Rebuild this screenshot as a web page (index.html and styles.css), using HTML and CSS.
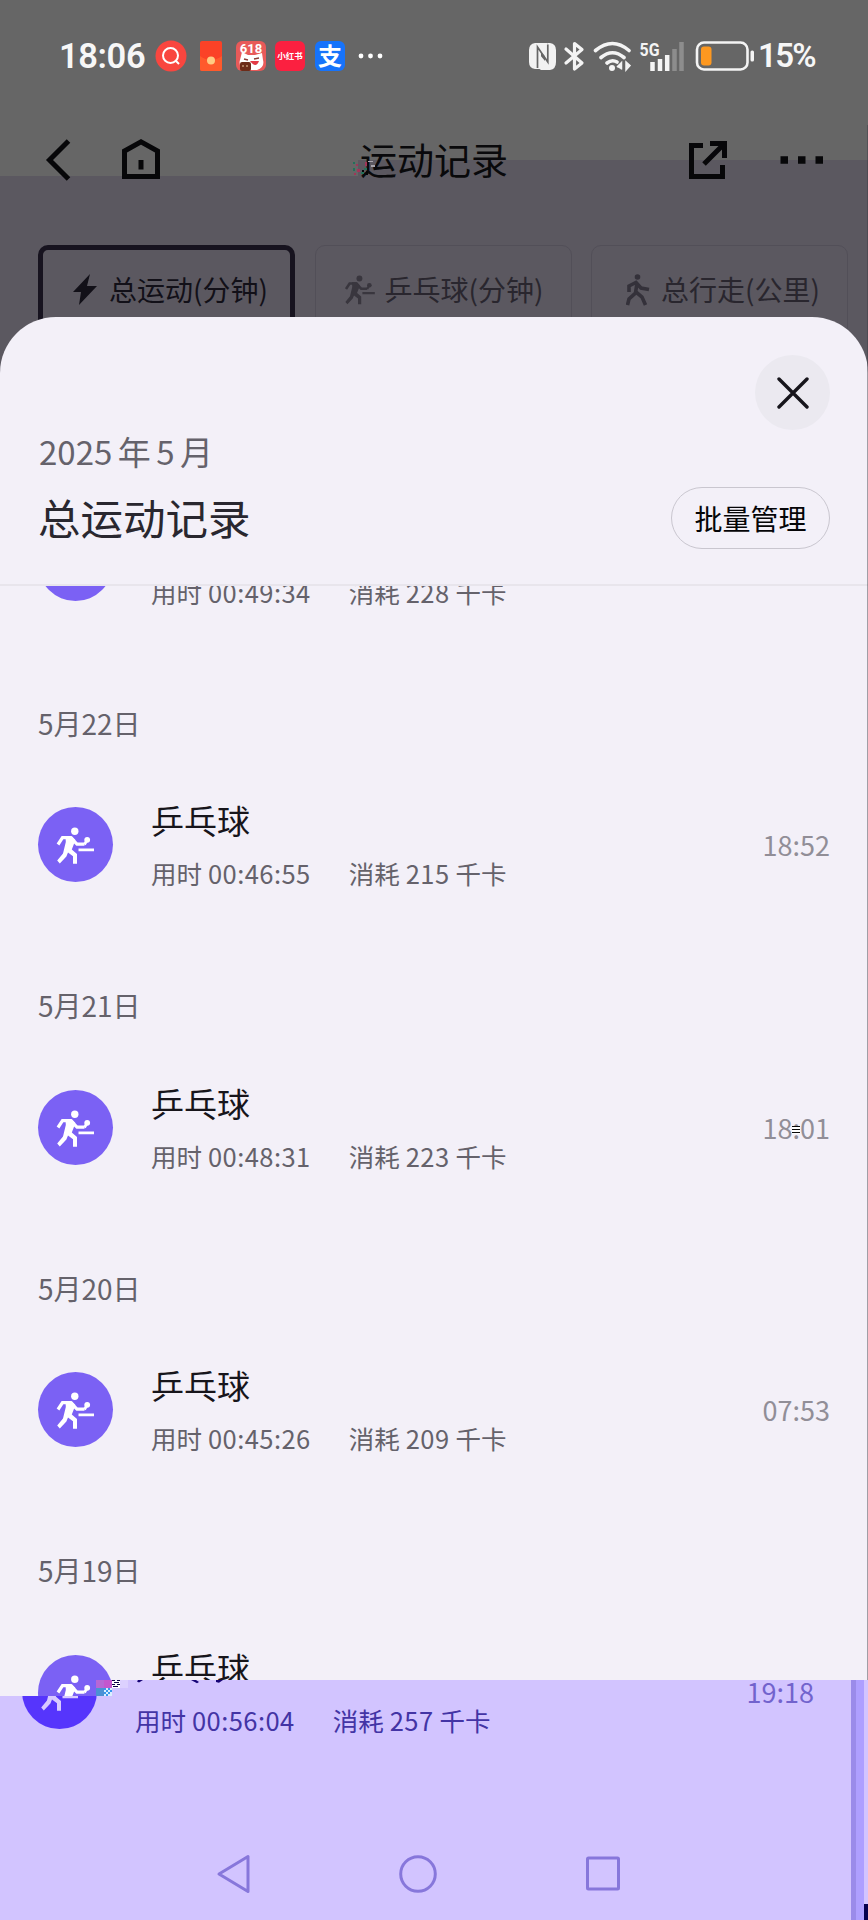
FILE: index.html
```html
<!DOCTYPE html>
<html lang="zh-CN">
<head>
<meta charset="utf-8">
<title>运动记录</title>
<link rel="stylesheet" href="styles.css">
</head>
<body>
<svg width="0" height="0" class="defs">
  <symbol id="player" viewBox="0 0 75 75">
    <circle cx="36.8" cy="24.3" r="3.7" fill="currentColor"/>
    <path d="M20 37.5L24.500 30.700H32.500L39 37.200H46.500" fill="none" stroke="currentColor" stroke-width="3.200"/>
    <path d="M27.500 29.200H34L37.500 33L33.800 42.500L39 47V56.700H35V49.300L30 45.500L28.400 49.500L21.800 56.500L19.200 53.600L25 46.500L27.800 35Z" fill="currentColor"/>
    <circle cx="49.200" cy="32.800" r="2.900" fill="currentColor"/>
    <path d="M46.500 37.500L48.500 34M40.500 42.800H56" stroke="currentColor" stroke-width="2.800"/>
  </symbol>
</svg>
<div class="screen">
  <header class="status">
    <span class="clock">18:06</span>
    <div class="apps">
      <svg width="32" height="32" viewBox="0 0 32 32"><circle cx="16" cy="16" r="15.500" fill="#f9463f"/><circle cx="15.500" cy="15.500" r="7.500" fill="none" stroke="#fff" stroke-width="2"/><path d="M21 21L24 24" stroke="#fff" stroke-width="2"/></svg>
      <svg class="envelope" width="22" height="30" viewBox="0 0 22 30"><rect width="22" height="30" rx="2" fill="#fb4227"/><path d="M0 15Q11 23 22 15V28Q22 30 20 30H2Q0 30 0 28Z" fill="#ff5a2c"/><circle cx="11" cy="19.500" r="4" fill="#ffcb83"/></svg>
      <svg class="sale" width="30" height="30" viewBox="0 0 30 30"><rect width="30" height="30" rx="6" fill="#e85a59"/><text x="15" y="12" text-anchor="middle" font-size="13" font-weight="700" fill="#fff">618</text><path d="M4 19L6 11L12 14H19L26 12L27 19Q29 26 21 29H9Q2 25 4 19Z" fill="#fff"/><path d="M8 18L12 19M18 18L23 17" stroke="#8e3d36" stroke-width="1.500"/><path d="M14 20H23Q20 28 14 20Z" fill="#e33945"/><rect x="4" y="21" width="11" height="9" rx="2" fill="#6b2c19"/><path d="M7 24v2M11 24v2" stroke="#eac9a0"/></svg>
      <span class="app red">小红书</span>
      <span class="app blue">支</span>
      <svg width="25" height="6" viewBox="0 0 25 6" fill="#fff"><circle cx="3" cy="3" r="2.400"/><circle cx="12.500" cy="3" r="2.400"/><circle cx="22" cy="3" r="2.400"/></svg>
    </div>
    <div class="signals">
      <svg width="226" height="34" viewBox="528 38 226 34">
        <path d="M535 42H547L551 45V62L541 51V68H535Q529 67 529 61V49Q529 43 535 42Z" fill="#f2f2f2"/>
        <path d="M548 42H550Q556 43 556 49V61Q556 68 550 69H541L535 65V48L545 60V45Z" fill="#f2f2f2"/>
        <path d="M537.500 67V46L547.800 61V43.500" fill="none" stroke="#666" stroke-width="1.700"/>
        <path d="M566 48L582 62L574.500 68V42.500L582 48.500L566 62" fill="none" stroke="#f4f4f4" stroke-width="3.200" stroke-linejoin="round" stroke-linecap="round"/>
        <path d="M595.500 49.500Q612.500 35.500 629 49.500M601 56.500Q612.500 47 624 56.500M607 62Q612 58 617 61" fill="none" stroke="#f4f4f4" stroke-width="3.600" stroke-linecap="round"/>
        <circle cx="612" cy="67" r="3" fill="#f4f4f4"/>
        <path d="M617 66L621.500 61.500V68.500M626 61V69L630 64.500Z" fill="#f4f4f4" stroke="#f4f4f4" stroke-width="1.500"/>
        <text x="639.500" y="55" font-size="19" font-weight="700" textLength="20" lengthAdjust="spacingAndGlyphs" fill="#f4f4f4">5G</text>
        <path d="M652.500 61V70M660 58V70M667.200 54V70" stroke="#f4f4f4" stroke-width="4.500"/>
        <path d="M674.500 48V70M681.500 41V70" stroke="#8d8d8d" stroke-width="4.500"/>
        <rect x="697" y="41.500" width="50.500" height="27" rx="7" fill="none" stroke="#f4f4f4" stroke-width="2.600"/>
        <rect x="701" y="45.500" width="10.500" height="19" rx="3" fill="#fd9820"/>
        <rect x="750.500" y="49.500" width="3.500" height="11" rx="1.500" fill="#f4f4f4"/>
      </svg>
      <span class="percent">15%</span>
    </div>
  </header>
  <nav class="titlebar">
    <svg width="120" height="50" viewBox="44 135 120 50" fill="none" stroke="#070709" stroke-width="5">
      <path d="M68.500 141L49.500 160L68.500 179"/>
      <path d="M124.500 176.500V151L141 141.800L157.500 151V176.500Z"/><path d="M141 160V169.500"/>
    </svg>
    <h1>运动记录</h1>
    <svg width="140" height="50" viewBox="686 135 140 50" fill="none" stroke="#070709" stroke-width="5">
      <path d="M703 145.500H691.500V176.500H722.500V165M704 164L723.500 144.500M710 143.500H724.500V158"/>
      <path d="M780.500 160H788M798 160H805.500M815.500 160H823" stroke-width="7.500"/>
    </svg>
    <svg class="specks" width="24" height="16" viewBox="0 0 24 16" shape-rendering="crispEdges"><path d="M1 2h2v2H1zM1 8h2v3H1zM9 12h3v2H9zM12 8h3v2h-3z" fill="#23705a"/><path d="M4 4h2v2H4zM5 9h3v3H5zM13 2h2v4h-2zM2 13h2v2H2z" fill="#a13459"/><path d="M16 1h5v1h-5zM19 5h4v2h-4z" fill="#a9a6ad"/><path d="M10 10h2v2h-2zM14 11h2v4h-2z" fill="#050507"/></svg>
  </nav>
  <div class="tabs">
    <div class="tab active"><svg width="24" height="31" viewBox="0 0 24 31"><path d="M17 0L0 18H8L6 31L24 12H14Z" fill="#121018"/></svg><span>总运动(分钟)</span></div>
    <div class="tab"><svg class="mini" width="60" height="60"><use href="#player"/></svg><span>乒乓球(分钟)</span></div>
    <div class="tab walk"><svg width="24" height="32" viewBox="0 0 24 32"><circle cx="11.500" cy="3" r="2.800" fill="#34313a"/><path d="M3 18V12L10 8.500L15 14L23 15.500M11 9L9.500 19L3 25L1.500 31M10 18L16 23L19.500 31" fill="none" stroke="#34313a" stroke-width="3.600"/></svg><span>总行走(公里)</span></div>
  </div>
  <main class="sheet">
    <div class="sheet-head">
      <button class="close" aria-label="关闭"><svg width="32" height="32" viewBox="0 0 32 32"><path d="M2 2L30 30M30 2L2 30" stroke="#17151c" stroke-width="3.400" stroke-linecap="round"/></svg></button>
      <div class="month"><span>2025</span><span>年</span><span>5</span><span>月</span></div>
      <div class="heading"><h2>总运动记录</h2><button class="manage">批量管理</button></div>
    </div>
    <div class="list">
      <section class="day first">
        <div class="record"><svg class="icon"></svg><div class="info"><b></b><p><span>用时</span><span class="num">00:49:34</span><span class="burn">消耗</span><span class="num">228</span><span>千卡</span></p></div></div>
      </section>
      <section class="day">
        <div class="date">5月22日</div>
        <div class="record"><svg class="icon"><use href="#player"/></svg><div class="info"><b>乒乓球</b><p><span>用时</span><span class="num">00:46:55</span><span class="burn">消耗</span><span class="num">215</span><span>千卡</span></p></div><time>18:52</time></div>
      </section>
      <section class="day">
        <div class="date">5月21日</div>
        <div class="record"><svg class="icon"><use href="#player"/></svg><div class="info"><b>乒乓球</b><p><span>用时</span><span class="num">00:48:31</span><span class="burn">消耗</span><span class="num">223</span><span>千卡</span></p></div><time class="striped">18:01</time></div>
      </section>
      <section class="day">
        <div class="date">5月20日</div>
        <div class="record"><svg class="icon"><use href="#player"/></svg><div class="info"><b>乒乓球</b><p><span>用时</span><span class="num">00:45:26</span><span class="burn">消耗</span><span class="num">209</span><span>千卡</span></p></div><time>07:53</time></div>
      </section>
      <section class="day">
        <div class="date">5月19日</div>
        <div class="record"><svg class="icon"><use href="#player"/></svg><div class="info"><b>乒乓球</b></div></div>
      </section>
    </div>
  </main>
  <footer class="tinted">
    <div class="record"><svg class="icon"><use href="#player"/></svg><div class="info"><b></b><p><span>用时</span><span class="num">00:56:04</span><span class="burn">消耗</span><span class="num">257</span><span>千卡</span></p></div><time>19:18</time></div>
    <div class="keys">
      <svg width="36" height="42" viewBox="0 0 36 42"><path d="M32 3.500V38.500L3 21Z"/></svg>
      <svg width="42" height="42" viewBox="0 0 42 42"><circle cx="21" cy="21" r="17.300"/></svg>
      <svg width="38" height="42" viewBox="0 0 38 42"><rect x="3.500" y="5" width="31" height="31" rx="1"/></svg>
    </div>
    <div class="slice"><div class="record"><svg class="icon"><use href="#player"/></svg></div></div>
    <svg class="blocks" width="32" height="16" viewBox="0 0 32 16" shape-rendering="crispEdges"><path d="M0 0H8V8H0z" fill="#b767d5"/><path d="M8 0H16V8H8z" fill="#c357ce"/><path d="M0 8H8V16H0z" fill="#4b91d4"/><path d="M8 8H16V16H8z" fill="#d9f0ff"/><path d="M8 8h2v2H8zM12 8h2v2h-2zM10 10h2v2h-2zM14 10h2v2h-2zM8 12h2v2H8zM12 12h2v2h-2zM10 14h2v2h-2z" fill="#3797ec"/><path d="M16 0H24V8H16z" fill="#fff"/><path d="M16 0h3v1h-3zM21 0h3v1h-3zM18 2h5v1h-5zM16 4h3v1h-3zM21 4h3v1h-3zM17 6h5v1h-5z" fill="#080047"/><path d="M24 0h8v8h-8z" fill="#dcd1ff"/></svg>
    <svg class="strokes" width="90" height="4" viewBox="0 0 90 4" fill="#160477"><path d="M1 0H6L2 2.500L0 1.500ZM54 0H59L62 2L60 3.200ZM79 0H86L82 2.800L79 2Z"/></svg>
    <i class="corner"></i>
  </footer>
  <i class="edge"></i>
</div>
</body>
</html>
```
FILE: styles.css
```css
* { box-sizing: border-box; margin: 0; padding: 0; }
body { width: 868px; height: 1920px; overflow: hidden; font-family: "Noto Sans CJK SC", sans-serif; background: #5b5860; }
svg { display: block; flex: none; }
.defs { position: absolute; }
button { font: inherit; border: 0; }
.screen { position: relative; display: flex; flex-direction: column; width: 868px; height: 1920px; overflow: hidden;
  background: linear-gradient(#666, #666) 0 0 / 100% 160px no-repeat, linear-gradient(#666, #666) 0 0 / 358px 176px no-repeat, #5b5860; }

.status { height: 110px; padding: 1px 54px 0 59px; display: flex; align-items: center; color: #f7f7f7; }
.clock { font: 600 34.500px/40px Roboto, sans-serif; width: 96px; letter-spacing: -0.400px; }
.apps { display: flex; align-items: center; }
.envelope { margin-left: 13px; }
.sale { margin-left: 14px; font-family: Roboto, sans-serif; }
.app { width: 30px; height: 30px; border-radius: 6px; color: #fff; text-align: center; }
.red { margin-left: 9px; background: #fb2040; font-size: 8.500px; line-height: 29px; font-weight: 700; }
.blue { margin: 0 13px 0 10px; background: #1673fb; font-size: 24px; line-height: 28px; font-weight: 700; }
.signals { margin-left: auto; display: flex; align-items: center; gap: 4px; font-family: Roboto, sans-serif; margin-right: -1px; }
.percent { font: 600 33px/40px Roboto, sans-serif; width: 57px; letter-spacing: -1.700px; }

.titlebar { position: relative; height: 100px; padding: 0 42px 0 44px; display: flex; align-items: center; justify-content: space-between; }
.titlebar h1 { font-size: 37px; line-height: 50px; font-weight: 400; color: #09090b; margin: -3px 0 0 18px; }
.specks { position: absolute; left: 352px; top: 50px; }

.tabs { height: 107px; padding: 35px 0 0 38px; display: flex; gap: 19.500px; width: 900px; }
.tab { width: 257px; height: 92px; flex: none; padding: 13px 0 0 28px; border: 1px solid #524f58; border-radius: 10px; display: flex; gap: 12px; color: #29262e; font-size: 28px; line-height: 60px; }
.tab svg { margin-top: 15px; }
.tab.active { border: 5px solid #17131f; padding: 9px 0 0 30px; color: #121018; }
.tab .mini { margin: 0 -17px 0 -14px; color: #39363e; }
.tab.walk { padding-left: 34px; gap: 11px; }

.sheet { height: 1363px; flex: none; background: #f3f0f8; border-radius: 56px 56px 0 0; overflow: hidden; }
.sheet-head { height: 269px; padding: 38px 38px 0 38px; border-bottom: 2px solid #e8e5ec; }
.close { display: flex; width: 75px; height: 75px; margin-left: auto; align-items: center; justify-content: center; border-radius: 50%; background: #ebe9f0; }
.month { display: flex; height: 50px; line-height: 50px; font-size: 33px; color: #65626b; gap: 5.500px; margin: -4px 0 0 1px; }
.heading { display: flex; justify-content: space-between; align-items: center; height: 62px; margin-top: 11px; }
.heading h2 { font-size: 42.500px; font-weight: 400; color: #29272f; line-height: 62px; margin-top: -3px; }
.manage { width: 159px; height: 62px; border: 1px solid #c9c6cf; border-radius: 31px; background: transparent; font-size: 28px; line-height: 58px; color: #050507; }

.list { height: 1094px; overflow: hidden; }
.day { height: 282.400px; padding: 0 38px; }
.day.first { height: 176.300px; margin-top: -69.400px; }
.day.first .record { margin-top: 0; }
.date { height: 60px; line-height: 60px; font-size: 28px; color: #65626b; }
.record { display: flex; align-items: flex-start; height: 100px; margin-top: 45.500px; }
.icon { width: 75px; height: 75px; margin-top: 9px; border-radius: 50%; background: #7b61f4; color: #fff; }
.info { margin: -2px 0 0 38px; }
.info b { display: block; font-weight: 400; font-size: 33px; line-height: 48px; height: 48px; color: #17151b; }
.info p { display: flex; gap: 6px; margin-top: 9px; font-size: 25.500px; line-height: 40px; color: #65626b; }
.num { letter-spacing: .450px; }
.burn { margin-left: 32px; }
.record time { position: relative; margin-left: auto; margin-top: 27px; font-size: 27px; line-height: 40px; color: #918e97; }
.striped::after { content: ""; position: absolute; left: 29px; top: 18px; width: 8px; height: 8px; background: repeating-linear-gradient(#080808 0 1px, #fff 1px 3px); }

.tinted { position: relative; height: 240px; flex: none; overflow: hidden; padding: 0 54px 0 22px;
  background: linear-gradient(90deg, #9a8bea 0 5px, #ae9fff 5px 13px, #d2c4ff 13px) 851px 0 / 17px 100% no-repeat, #d2c4ff; }
.tinted > .record { margin-top: -35px; height: 100px; }
.tinted .icon { background: #5635fc; color: #d8caff; }
.tinted .info p { color: #4334a5; }
.tinted time { color: #7263cd; }
.keys { display: flex; justify-content: center; align-items: center; gap: 145px; padding-left: 2px; margin-top: 108px; height: 42px; fill: none; stroke: #8777db; stroke-width: 3; stroke-linejoin: round; }
.slice { position: absolute; left: 0; top: 0; width: 96px; height: 16px; padding-left: 38px; background: #f3f0f8; overflow: hidden; }
.slice .record { margin-top: -34.500px; }
.slice .icon { background: #7b61f4; color: #fff; }
.blocks { position: absolute; left: 96px; top: 0; }
.strokes { position: absolute; left: 137px; top: 0; }
.corner { position: absolute; right: 0; bottom: 0; width: 4px; height: 16px; background: #06004f; }
.edge { position: absolute; right: 0; top: 125px; width: 1px; height: 1555px; background: rgba(60, 58, 66, .45); }
```
